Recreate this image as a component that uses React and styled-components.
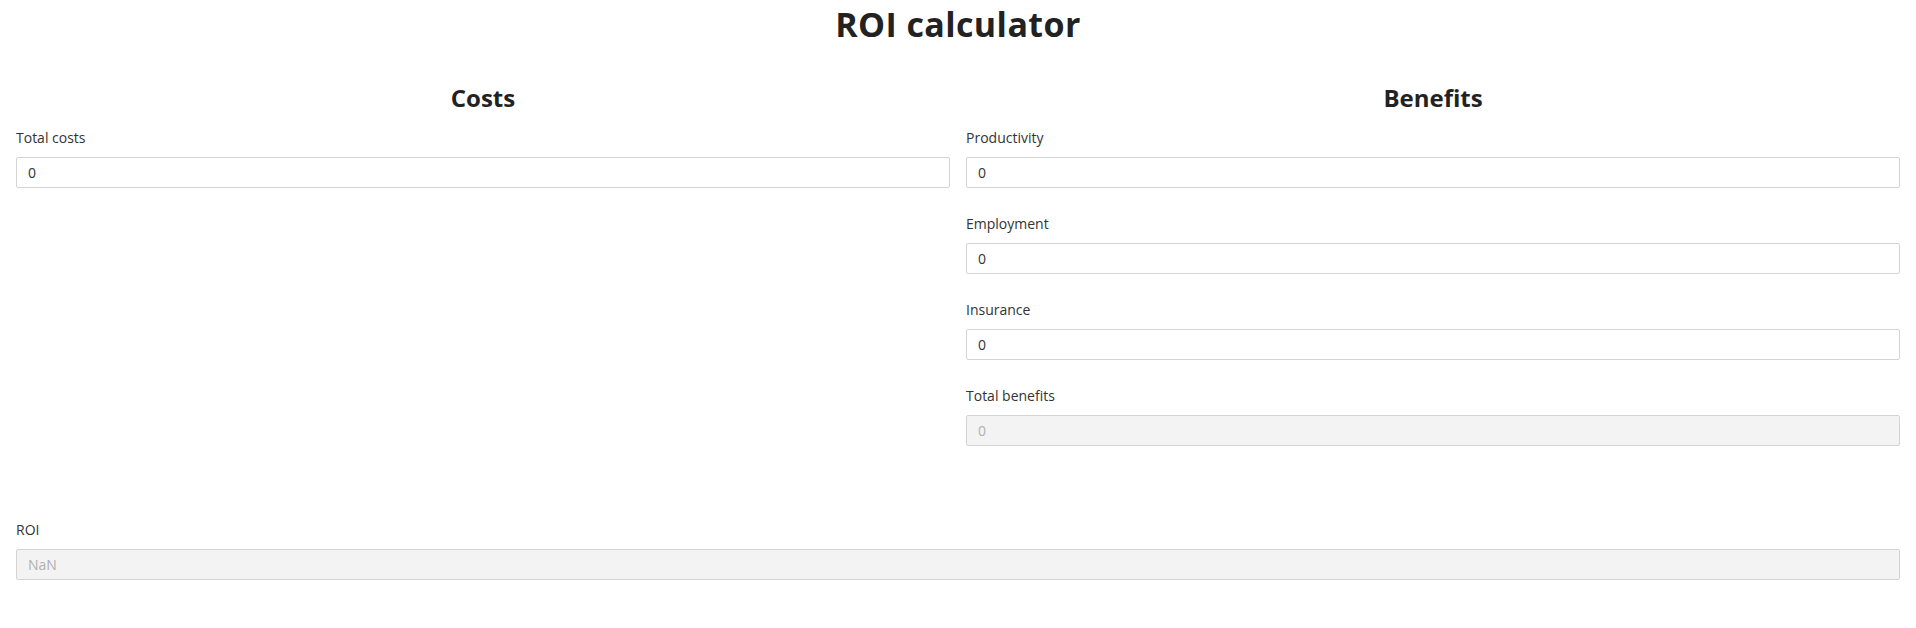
import React, { useState } from "react";
import styled, { createGlobalStyle } from "styled-components";

const GlobalStyle = createGlobalStyle`
  body {
    margin: 0;
    background: #ffffff;
    font-family: "Open Sans", "Noto Sans", Arial, sans-serif;
    color: #333333;
  }
`;

const Page = styled.div`
  padding: 0 16px;
`;

const Title = styled.h1`
  margin: 0;
  padding-top: 1px;
  font-size: 34px;
  line-height: 46px;
  font-weight: 700;
  letter-spacing: 0.4px;
  text-align: center;
  color: #222222;
`;

const Columns = styled.div`
  display: grid;
  grid-template-columns: 1fr 1fr;
  column-gap: 16px;
  margin-top: 35px;
`;

const Column = styled.div`
  display: flex;
  flex-direction: column;
  gap: 25px;
`;

const Heading = styled.h2`
  margin: 0 0 -12px;
  font-size: 24px;
  line-height: 32px;
  font-weight: 700;
  text-align: center;
  color: #222222;
`;

const Field = styled.div`
  display: flex;
  flex-direction: column;
`;

const Label = styled.label`
  display: block;
  padding-top: 1px;
  font-size: 14px;
  line-height: 20px;
  margin-bottom: 9px;
  color: #333333;
`;

const Input = styled.input`
  box-sizing: border-box;
  width: 100%;
  height: 31px;
  padding: 0 11px;
  border: 1px solid #d4d4d4;
  border-radius: 2px;
  background: #ffffff;
  font-family: inherit;
  font-size: 14px;
  color: #333333;
  outline: none;

  &:disabled {
    background: #f3f3f3;
    color: #b0b0b0;
    -webkit-text-fill-color: #b0b0b0;
    opacity: 1;
  }
`;

const Result = styled.div`
  margin-top: 73px;
`;

const NumberField = ({ label, value, onChange, disabled }) => (
  <Field>
    <Label>{label}</Label>
    <Input
      type="text"
      value={value}
      disabled={disabled}
      onChange={e => onChange && onChange(e.target.value)}
    />
  </Field>
);

const App = () => {
  const [costs, setCosts] = useState("0");
  const [productivity, setProductivity] = useState("0");
  const [employment, setEmployment] = useState("0");
  const [insurance, setInsurance] = useState("0");

  const benefits =
    (Number(productivity) || 0) + (Number(employment) || 0) + (Number(insurance) || 0);
  const roi = ((benefits - Number(costs)) / Number(costs)) * 100;

  return (
    <Page>
      <GlobalStyle />
      <Title>ROI calculator</Title>
      <Columns>
        <Column>
          <Heading>Costs</Heading>
          <NumberField label="Total costs" value={costs} onChange={setCosts} />
        </Column>
        <Column>
          <Heading>Benefits</Heading>
          <NumberField label="Productivity" value={productivity} onChange={setProductivity} />
          <NumberField label="Employment" value={employment} onChange={setEmployment} />
          <NumberField label="Insurance" value={insurance} onChange={setInsurance} />
          <NumberField label="Total benefits" value={String(benefits)} disabled />
        </Column>
      </Columns>
      <Result>
        <NumberField label="ROI" value={String(roi)} disabled />
      </Result>
    </Page>
  );
};

export default App;
